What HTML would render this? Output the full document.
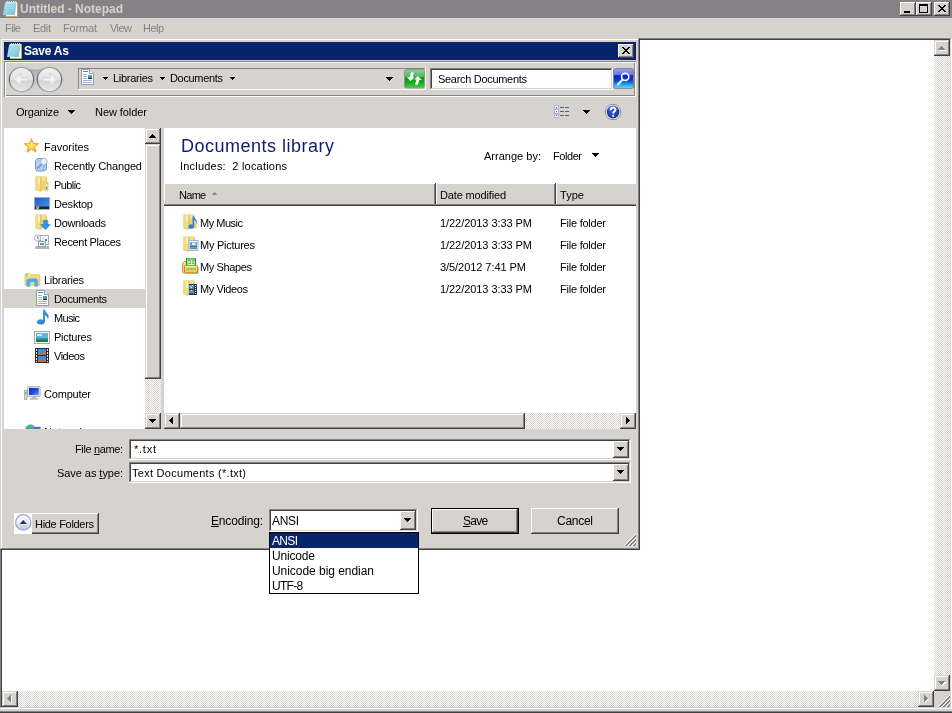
<!DOCTYPE html>
<html>
<head>
<meta charset="utf-8">
<title>Untitled - Notepad</title>
<style>
*{box-sizing:border-box;margin:0;padding:0}
html,body{width:952px;height:713px;overflow:hidden;background:#D6D3CE}
body{position:relative;font-family:"Liberation Sans",sans-serif;font-size:11px;line-height:13px;color:#000}
.a{position:absolute}
.t{position:absolute;white-space:nowrap;height:13px;line-height:13px}
.face{background:#D6D3CE}
.white{background:#fff}
.btn{position:absolute;background:#D6D3CE;box-shadow:inset -1px -1px 0 #424142,inset 1px 1px 0 #fff,inset -2px -2px 0 #848284,inset 2px 2px 0 #D6D3CE}
.sbtn{position:absolute;background:#D6D3CE;box-shadow:inset -1px -1px 0 #424142,inset 1px 1px 0 #D6D3CE,inset -2px -2px 0 #848284,inset 2px 2px 0 #fff}
.sunk{position:absolute;background:#fff;box-shadow:inset -1px -1px 0 #fff,inset 1px 1px 0 #848284,inset -2px -2px 0 #D6D3CE,inset 2px 2px 0 #424142}
.sunk1{position:absolute;box-shadow:inset -1px -1px 0 #fff,inset 1px 1px 0 #848284}
.chk{position:absolute;background-color:#fff;background-image:conic-gradient(#D6D3CE 25%,#fff 0 50%,#D6D3CE 0 75%,#fff 0);background-size:2px 2px}
svg{position:absolute;display:block;overflow:visible}
.ul{text-decoration:underline}
</style>
</head>
<body>
<svg width="0" height="0" style="left:-10px;top:-10px">
<defs>
<g id="xg"><path d="M0 0h2v1h1v1h2V1h1V0h2v1H7v1H6v1H5v1h1v1h1v1h1v1H6V6H5V5H3v1H2v1H0V6h1V5h1V4h1V3H2V2H1V1H0z" fill="#000"/></g>
<g id="grip" shape-rendering="crispEdges">
<path d="M11 0h1v1h-1zM10 1h1v1h-1zM9 2h1v1H9zM8 3h1v1H8zM7 4h1v1H7zM6 5h1v1H6zM5 6h1v1H5zM4 7h1v1H4zM3 8h1v1H3zM2 9h1v1H2zM1 10h1v1H1zM0 11h1v1H0z M11 4h1v1h-1zM10 5h1v1h-1zM9 6h1v1H9zM8 7h1v1H8zM7 8h1v1H7zM6 9h1v1H6zM5 10h1v1H5zM4 11h1v1H4z M11 8h1v1h-1zM10 9h1v1h-1zM9 10h1v1H9zM8 11h1v1H8z" fill="#fff"/>
<path d="M11 1h1v2h-1zM10 2h1v2h-1zM9 3h1v2H9zM8 4h1v2H8zM7 5h1v2H7zM6 6h1v2H6zM5 7h1v2H5zM4 8h1v2H4zM3 9h1v2H3zM2 10h1v2H2zM1 11h1v1H1z M11 5h1v2h-1zM10 6h1v2h-1zM9 7h1v2H9zM8 8h1v2H8zM7 9h1v2H7zM6 10h1v2H6zM5 11h1v1H5z M11 9h1v2h-1zM10 10h1v2h-1zM9 11h1v1H9z" fill="#848284"/>
</g>
<linearGradient id="npg" x1="0" y1="0" x2="1" y2="1"><stop offset="0" stop-color="#C4EEF4"/><stop offset="1" stop-color="#6FC0D4"/></linearGradient>
<g id="npico">
<rect x="4" y="1" width="11.5" height="14.5" fill="#fff"/>
<path d="M4 15.5H15.5V1" fill="none" stroke="#C2A561" stroke-width="1"/>
<path d="M3.2 1.6 L14.6 1.6 L12.8 14 L1 14Z" fill="url(#npg)"/>
<path d="M3 4.2H14M2.6 6.4H13.7M2.3 8.6H13.4M2 10.8H13.1" stroke="#8FD0DE" stroke-width=".7"/>
<path d="M5.4 0v2M7.4 0v2M9.5 0v2M11.5 0v2M13.6 0v2" stroke="#BDECF2" stroke-width="1.1"/>
</g>
<g id="docico">
<path d="M1.5 .5 H9.5 L13.5 4.5 V15.5 H1.5Z" fill="#fff" stroke="#9A9CA4" stroke-width="1"/>
<path d="M9.5 .5 V4.5 H13.5" fill="#F4F4F6" stroke="#9A9CA4" stroke-width="1"/>
<path d="M3 2.5H8" stroke="#3E9CA8" stroke-width="1"/>
<path d="M3 5.5H7M3 7.5H7M3 9.5H7M3 11.5H12M3 13.5H12" stroke="#A9A9DE" stroke-width="1"/>
<rect x="8" y="6" width="4" height="2" fill="#4A9AE0"/><rect x="8" y="8" width="4" height="1" fill="#3E9A50"/><rect x="8" y="9" width="4" height="1" fill="#203040"/>
</g>
</defs>
</svg>
<svg width="0" height="0" style="left:-10px;top:-10px">
<defs>
<linearGradient id="fog" x1="0" y1="0" x2="1" y2="0"><stop offset="0" stop-color="#F7E7A6"/><stop offset=".45" stop-color="#EFD473"/><stop offset=".5" stop-color="#FBF1C4"/><stop offset="1" stop-color="#EBCB62"/></linearGradient>
<g id="fold">
<path d="M.4 1 Q.4 .4 1 .4 H10.8 Q11.4 .4 11.4 1 V1.6 H11.9 V5.8 H12.6 Q13.4 5.8 13.4 6.6 V13.6 Q13.4 14.4 12.6 14.4 H6.2 V15.6 H3.2 V14.8 H1 Q.4 14.8 .4 14.2Z" fill="#E6C75A"/>
<rect x="1" y="1" width="4.6" height="13.4" fill="#F0DB86"/>
<rect x="3.5" y="1.4" width="1.1" height="6.4" fill="#FFFDF2"/>
<rect x="5.6" y="1" width=".8" height="14" fill="#D8B850"/>
<rect x="6.4" y="1" width="4.8" height="13" fill="#EDD272"/>
<rect x="6.8" y="1.2" width="3.4" height="3.6" fill="#F4E29C"/>
</g>
<linearGradient id="scr" x1="0" y1="0" x2="1" y2="1"><stop offset="0" stop-color="#0C22B8"/><stop offset=".55" stop-color="#2450D8"/><stop offset="1" stop-color="#6C9CF0"/></linearGradient>
<g id="comp">
<rect x="3.6" y=".6" width="12.6" height="10" rx=".8" fill="#DCDEE2" stroke="#A2A6AC" stroke-width=".8"/>
<rect x="5" y="2" width="9.8" height="7" fill="url(#scr)"/>
<rect x="8" y="10.6" width="4" height="1.6" fill="#B8BCC2"/><rect x="6" y="12.2" width="8" height="1.2" fill="#C4C8CC" stroke="#9CA0A6" stroke-width=".4"/>
<rect x=".6" y="4.6" width="2.4" height="8.8" fill="#D2D4D8" stroke="#9A9EA4" stroke-width=".7"/>
<rect x="1.2" y="6" width="1.2" height="2.4" fill="#48C040"/>
</g>
</defs>
</svg>
<!-- ================= NOTEPAD WINDOW ================= -->
<div class="a" style="left:0;top:0;width:952px;height:18px;background:#848284"></div>
<!-- notepad icon -->
<svg style="left:2px;top:1px" width="17" height="16" viewBox="0 0 17 16"><use href="#npico"/></svg>

<!-- caption buttons -->
<div class="btn" style="left:900px;top:2px;width:16px;height:14px"></div>
<div class="a" style="left:904px;top:11px;width:6px;height:2px;background:#000"></div>
<div class="btn" style="left:916px;top:2px;width:16px;height:14px"></div>
<div class="a" style="left:919px;top:4px;width:9px;height:9px;border:1px solid #000;border-top-width:2px"></div>
<div class="btn" style="left:934px;top:2px;width:16px;height:14px"></div>
<svg style="left:938px;top:5px" width="8" height="7" viewBox="0 0 8 7" shape-rendering="crispEdges"><use href="#xg"/></svg>

<!-- edit control -->
<div class="sunk" style="left:0;top:38px;width:952px;height:671px"></div>
<!-- v scrollbar -->
<div class="chk" style="left:934px;top:40px;width:16px;height:651px"></div>
<div class="sbtn" style="left:934px;top:40px;width:16px;height:16px"></div>
<svg style="left:938px;top:46px" width="8" height="5" viewBox="0 0 8 5" shape-rendering="crispEdges"><path d="M4 1h1v1h1v1h1v1h1v1H1V4h1V3h1V2h1z" fill="#fff"/><path d="M3 0h1v1h1v1h1v1h1v1H0V3h1V2h1V1h1z" fill="#848284"/></svg>
<div class="sbtn" style="left:934px;top:675px;width:16px;height:16px"></div>
<svg style="left:938px;top:681px" width="8" height="5" viewBox="0 0 8 5" shape-rendering="crispEdges"><path d="M1 1h7v1H7v1H6v1H5v1H4V4H3V3H2V2H1z" fill="#fff"/><path d="M0 0h7v1H6v1H5v1H4v1H3V3H2V2H1V1H0z" fill="#848284"/></svg>
<!-- h scrollbar -->
<div class="chk" style="left:2px;top:691px;width:932px;height:16px"></div>
<div class="sbtn" style="left:2px;top:691px;width:16px;height:16px"></div>
<svg style="left:7px;top:695px" width="5" height="8" viewBox="0 0 5 8" shape-rendering="crispEdges"><path d="M4 1h1v7H4V7H3V6H2V5H1V4h1V3h1V2h1z" fill="#fff"/><path d="M3 0h1v7H3V6H2V5H1V4H0V3h1V2h1V1h1z" fill="#848284"/></svg>
<div class="sbtn" style="left:918px;top:691px;width:16px;height:16px"></div>
<svg style="left:924px;top:695px" width="5" height="8" viewBox="0 0 5 8" shape-rendering="crispEdges"><path d="M1 1h1v1h1v1h1v1h1v1H4v1H3v1H2v1H1z" fill="#fff"/><path d="M0 0h1v1h1v1h1v1h1v1H3v1H2v1H1v1H0z" fill="#848284"/></svg>
<div class="a face" style="left:934px;top:691px;width:16px;height:16px"></div>
<svg style="left:938px;top:695px" width="13" height="13" viewBox="0 0 13 13"><use href="#grip"/></svg>
<!-- bottom frame -->
<div class="a" style="left:0;top:711px;width:952px;height:1px;background:#848284"></div>
<div class="a" style="left:0;top:712px;width:952px;height:1px;background:#424142"></div>

<!-- ================= SAVE AS DIALOG ================= -->
<div class="a" id="dlg" style="left:0;top:38px;width:640px;height:512px;background:#D6D3CE;box-shadow:inset -1px -1px 0 #424142,inset 1px 1px 0 #D6D3CE,inset -2px -2px 0 #848284,inset 2px 2px 0 #fff"></div>
<div class="a" style="left:4px;top:42px;width:632px;height:18px;background:#08246B"></div>
<svg style="left:6px;top:43px" width="17" height="16" viewBox="0 0 17 16"><use href="#npico"/></svg>
<div class="btn" style="left:618px;top:44px;width:16px;height:14px"></div>
<svg style="left:622px;top:47px" width="8" height="7" viewBox="0 0 8 7" shape-rendering="crispEdges"><use href="#xg"/></svg>

<!-- nav bar groove -->
<div class="a" style="left:4px;top:61px;width:632px;height:36px;box-shadow:inset 1px 1px 0 #848284,inset -1px -1px 0 #fff,inset 2px 2px 0 #fff,inset -2px -2px 0 #848284"></div>
<!-- back / forward -->
<svg style="left:7px;top:65px" width="58" height="30" viewBox="0 0 58 30">
<defs>
<linearGradient id="pillg" x1="0" y1="0" x2="0" y2="1"><stop offset="0" stop-color="#A9A7A4"/><stop offset=".45" stop-color="#C4C2BE"/><stop offset="1" stop-color="#DAD8D4"/></linearGradient>
<linearGradient id="ballg" x1="0" y1="0" x2="0" y2="1"><stop offset="0" stop-color="#F2F2F2"/><stop offset=".5" stop-color="#E2E2E2"/><stop offset=".5" stop-color="#D2D2D2"/><stop offset="1" stop-color="#E9E9E9"/></linearGradient>
<linearGradient id="ringg" x1="0" y1="0" x2="0" y2="1"><stop offset="0" stop-color="#9AA0A6"/><stop offset=".5" stop-color="#5F6A74"/><stop offset="1" stop-color="#A4A8AC"/></linearGradient>
</defs>
<path d="M14.5 2.5 C22 5 36 5 42.5 2.5 L42.5 27.5 C36 25 22 25 14.5 27.5Z" fill="url(#pillg)"/>
<circle cx="14.5" cy="14.5" r="12.2" fill="url(#ballg)" stroke="url(#ringg)" stroke-width="1.3"/>
<circle cx="42.5" cy="14.5" r="12.2" fill="url(#ballg)" stroke="url(#ringg)" stroke-width="1.3"/>
<path d="M6.9 14.5 L14 8 V12.8 H21.3 V16.2 H14 V21Z" fill="#F1F1F1" stroke="#CDCDCD" stroke-width=".8"/>
<path d="M50.1 14.5 L43 8 V12.8 H35.7 V16.2 H43 V21Z" fill="#F1F1F1" stroke="#CDCDCD" stroke-width=".8"/>
</svg>

<!-- address box -->
<div class="sunk1" style="left:78px;top:68px;width:348px;height:22px"></div>
<svg style="left:80px;top:69px" width="16" height="16" viewBox="0 0 16 16"><use href="#docico"/></svg>
<svg style="left:103px;top:77px" width="5" height="3" viewBox="0 0 5 3" shape-rendering="crispEdges"><path d="M0 0h5v1H4v1H3v1H2V2H1V1H0z"/></svg>
<svg style="left:160px;top:77px" width="5" height="3" viewBox="0 0 5 3" shape-rendering="crispEdges"><path d="M0 0h5v1H4v1H3v1H2V2H1V1H0z"/></svg>
<svg style="left:230px;top:77px" width="5" height="3" viewBox="0 0 5 3" shape-rendering="crispEdges"><path d="M0 0h5v1H4v1H3v1H2V2H1V1H0z"/></svg>
<svg style="left:386px;top:77px" width="7" height="4" viewBox="0 0 7 4" shape-rendering="crispEdges"><path d="M0 0h7v1H6v1H5v1H4v1H3V3H2V2H1V1H0z"/></svg>
<!-- refresh -->
<svg style="left:404px;top:69px" width="21" height="20" viewBox="0 0 21 20">
<defs><linearGradient id="grn" x1="0" y1="0" x2="0" y2="1"><stop offset="0" stop-color="#8AD592"/><stop offset=".38" stop-color="#4DBB55"/><stop offset=".42" stop-color="#0D9A12"/><stop offset=".7" stop-color="#16A81A"/><stop offset="1" stop-color="#3FD23F"/></linearGradient></defs>
<rect x=".5" y=".5" width="20" height="18.5" rx="2" fill="url(#grn)" stroke="#8E9690"/>
<path d="M7.4 3 L9.8 3.7 L8.7 8 L10.6 8.5 L6.3 12.3 L2.9 8 L5.7 8.2Z" fill="#fff"/>
<path d="M13.9 7 L17.9 11 L15.5 10.8 L13.6 15.9 L10.9 15.2 L12.7 10.5 L10 10.4Z" fill="#fff"/>
</svg>
<!-- search box -->
<div class="sunk" style="left:430px;top:68px;width:183px;height:22px"></div>
<svg style="left:613px;top:68px" width="21" height="21" viewBox="0 0 21 21">
<defs><linearGradient id="blu" x1="0" y1="0" x2="0" y2="1"><stop offset="0" stop-color="#9A9EEC"/><stop offset=".3" stop-color="#6C78E0"/><stop offset=".36" stop-color="#0A22C4"/><stop offset=".6" stop-color="#0C40D0"/><stop offset=".85" stop-color="#30B8F4"/><stop offset="1" stop-color="#58DCFC"/></linearGradient></defs>
<rect x=".5" y=".5" width="20" height="20" rx="2" fill="url(#blu)" stroke="#8A868C"/>
<circle cx="12.2" cy="8.8" r="3.6" fill="none" stroke="#fff" stroke-width="1.6"/>
<path d="M9.6 11.6 L5 16.4" stroke="#E8ECF8" stroke-width="2.2" stroke-linecap="round"/>
</svg>

<!-- toolbar -->
<svg style="left:68px;top:110px" width="7" height="4" viewBox="0 0 7 4" shape-rendering="crispEdges"><path d="M0 0h7v1H6v1H5v1H4v1H3V3H2V2H1V1H0z"/></svg>
<svg style="left:554px;top:105px" width="16" height="14" viewBox="0 0 16 14" shape-rendering="crispEdges">
<rect x="0" y="0" width="5" height="13" fill="#E8ECF4"/>
<rect x=".5" y=".5" width="4" height="3.4" fill="#fff" stroke="#A8B4D8"/><rect x=".5" y="4.8" width="4" height="3.4" fill="#fff" stroke="#A8B4D8"/><rect x=".5" y="9.1" width="4" height="3.4" fill="#fff" stroke="#A8B4D8"/>
<rect x="2" y="2" width="1" height="1" fill="#30A030"/><rect x="2" y="6" width="1" height="1" fill="#D03030"/><rect x="2" y="10" width="1" height="1" fill="#3060D0"/>
<path d="M6 2h4v1H6zM11 2h4v1h-4zM6 6h4v1H6zM11 6h4v1h-4zM6 10h4v1H6zM11 10h4v1h-4z" fill="#52647C"/>
</svg>
<svg style="left:583px;top:110px" width="7" height="4" viewBox="0 0 7 4" shape-rendering="crispEdges"><path d="M0 0h7v1H6v1H5v1H4v1H3V3H2V2H1V1H0z"/></svg>
<svg style="left:604px;top:103px" width="18" height="18" viewBox="0 0 18 18">
<defs><radialGradient id="hlp" cx=".4" cy=".3" r=".8"><stop offset="0" stop-color="#3C68D8"/><stop offset="1" stop-color="#10288C"/></radialGradient></defs>
<circle cx="9" cy="9" r="7.7" fill="#fff" stroke="#8C8C94" stroke-width="1"/>
<circle cx="9" cy="9" r="6.4" fill="url(#hlp)"/>
<path d="M6.6 7.2 C6.6 3.6 11.6 3.8 11.5 6.8 C11.4 8.6 9.2 8.6 9.2 10.6" fill="none" stroke="#fff" stroke-width="1.9"/>
<rect x="8.2" y="11.8" width="2" height="2" fill="#fff"/>
</svg>

<!-- nav pane -->
<div class="a white" style="left:4px;top:128px;width:141px;height:301px;overflow:hidden" id="navpane">
<div class="a face" style="left:0;top:161px;width:141px;height:19px"></div>
</div>
<!-- nav scrollbar -->
<div class="chk" style="left:145px;top:128px;width:16px;height:301px"></div>
<div class="sbtn" style="left:145px;top:128px;width:16px;height:16px"></div>
<svg style="left:149px;top:134px" width="7" height="4" viewBox="0 0 7 4" shape-rendering="crispEdges"><path d="M3 0h1v1h1v1h1v1h1v1H0V3h1V2h1V1h1z"/></svg>
<div class="sbtn" style="left:145px;top:144px;width:16px;height:235px"></div>
<div class="sbtn" style="left:145px;top:413px;width:16px;height:16px"></div>
<svg style="left:149px;top:419px" width="7" height="4" viewBox="0 0 7 4" shape-rendering="crispEdges"><path d="M0 0h7v1H6v1H5v1H4v1H3V3H2V2H1V1H0z"/></svg>

<!-- file pane -->
<div class="a white" style="left:164px;top:128px;width:472px;height:285px"></div>
<!-- header -->
<div class="a face" style="left:164px;top:184px;width:472px;height:22px"></div>
<!-- h scroll -->
<div class="chk" style="left:164px;top:413px;width:472px;height:16px"></div>
<div class="sbtn" style="left:164px;top:413px;width:16px;height:16px"></div>
<svg style="left:169px;top:417px" width="4" height="7" viewBox="0 0 4 7" shape-rendering="crispEdges"><path d="M3 0h1v7H3V6H2V5H1V4H0V3h1V2h1V1h1z"/></svg>
<div class="sbtn" style="left:180px;top:413px;width:345px;height:16px"></div>
<div class="sbtn" style="left:620px;top:413px;width:16px;height:16px"></div>
<svg style="left:626px;top:417px" width="4" height="7" viewBox="0 0 4 7" shape-rendering="crispEdges"><path d="M0 0h1v1h1v1h1v1h1v1H3v1H2v1H1v1H0z"/></svg>
<!-- header separators -->
<div class="a" style="left:434px;top:184px;width:1px;height:21px;background:#848284"></div>
<div class="a" style="left:435px;top:183px;width:1px;height:23px;background:#424142"></div>
<div class="a" style="left:436px;top:184px;width:1px;height:20px;background:#fff"></div>
<div class="a" style="left:554px;top:184px;width:1px;height:21px;background:#848284"></div>
<div class="a" style="left:555px;top:183px;width:1px;height:23px;background:#424142"></div>
<div class="a" style="left:556px;top:184px;width:1px;height:20px;background:#fff"></div>
<div class="a" style="left:164px;top:204px;width:472px;height:1px;background:#848284"></div>
<div class="a" style="left:164px;top:205px;width:472px;height:1px;background:#424142"></div>
<div class="a" style="left:164px;top:184px;width:1px;height:20px;background:#fff"></div>
<!-- sort arrow -->
<svg style="left:212px;top:192px" width="5" height="3" viewBox="0 0 5 3" shape-rendering="crispEdges"><path d="M2 0h1v1h1v1h1v1H0V2h1V1h1z" fill="#8C8C98"/></svg>
<!-- arrange-by arrow -->
<svg style="left:592px;top:153px" width="7" height="4" viewBox="0 0 7 4" shape-rendering="crispEdges"><path d="M0 0h7v1H6v1H5v1H4v1H3V3H2V2H1V1H0z"/></svg>

<!-- file name / type combos -->
<div class="sunk" style="left:129px;top:439px;width:502px;height:21px"></div>
<div class="btn" style="left:613px;top:441px;width:16px;height:17px"></div>
<svg style="left:617px;top:447px" width="7" height="4" viewBox="0 0 7 4" shape-rendering="crispEdges"><path d="M0 0h7v1H6v1H5v1H4v1H3V3H2V2H1V1H0z"/></svg>
<div class="sunk" style="left:129px;top:462px;width:502px;height:21px"></div>
<div class="btn" style="left:613px;top:464px;width:16px;height:17px"></div>
<svg style="left:617px;top:470px" width="7" height="4" viewBox="0 0 7 4" shape-rendering="crispEdges"><path d="M0 0h7v1H6v1H5v1H4v1H3V3H2V2H1V1H0z"/></svg>

<!-- hide folders -->
<div class="btn" style="left:14px;top:513px;width:85px;height:21px"></div>
<div class="a white" style="left:14px;top:513px;width:18px;height:21px"></div>
<svg style="left:15px;top:514px" width="17" height="18" viewBox="0 0 17 18">
<defs><linearGradient id="hfg" x1="0" y1="0" x2="0" y2="1"><stop offset="0" stop-color="#FFFFFF"/><stop offset=".5" stop-color="#ECEEF0"/><stop offset="1" stop-color="#BFC4C8"/></linearGradient></defs>
<circle cx="8.3" cy="8.4" r="7.7" fill="url(#hfg)" stroke="#98A2E2" stroke-width="1.2"/>
<path d="M4.7 9.9 L8.3 6 L11.9 9.9Z" fill="#1C2F9E"/>
</svg>

<!-- encoding combo -->
<div class="sunk" style="left:269px;top:509px;width:149px;height:23px"></div>
<div class="btn" style="left:400px;top:511px;width:16px;height:19px"></div>
<svg style="left:404px;top:518px" width="7" height="4" viewBox="0 0 7 4" shape-rendering="crispEdges"><path d="M0 0h7v1H6v1H5v1H4v1H3V3H2V2H1V1H0z"/></svg>

<!-- save / cancel -->
<div class="a" style="left:431px;top:508px;width:88px;height:26px;background:#000"></div>
<div class="btn" style="left:432px;top:509px;width:86px;height:24px"></div>
<div class="btn" style="left:531px;top:508px;width:88px;height:26px"></div>

<!-- dialog grip -->
<svg style="left:624px;top:534px" width="13" height="13" viewBox="0 0 13 13"><use href="#grip"/></svg>

<!-- dropdown list -->
<div class="a" style="left:269px;top:532px;width:150px;height:62px;background:#fff;border:1px solid #000"></div>
<div class="a" style="left:270px;top:533px;width:148px;height:15px;background:#08246B"></div>
<!-- ===== tree icons ===== -->
<svg style="left:24px;top:138px" width="15" height="15" viewBox="0 0 15 15">
<defs><radialGradient id="stg" cx=".5" cy=".5" r=".55"><stop offset="0" stop-color="#FFF08A"/><stop offset=".55" stop-color="#FFC83A"/><stop offset="1" stop-color="#F08A1C"/></radialGradient></defs>
<path d="M7.5 .6 L9.5 5.4 L14.6 5.7 L10.7 9 L12 14.2 L7.5 11.3 L3 14.2 L4.3 9 L.4 5.7 L5.5 5.4Z" fill="url(#stg)" stroke="#EE8A20" stroke-width=".7" stroke-linejoin="round"/>
</svg>
<!-- recently changed -->
<svg style="left:34px;top:157px" width="15" height="15" viewBox="0 0 15 15">
<path d="M1.5 3.5 L3.5 1.5 H10.5 L12.5 3.5 V12 L10.5 14 H3 L1.5 12.5Z" fill="#B3CFF3" stroke="#6C98E2" stroke-width="1" stroke-linejoin="round"/>
<path d="M9.8 4.5 V13.5" stroke="#86ABEA" stroke-width="1"/>
<path d="M8 6.8 L3.6 11.2" stroke="#8C949C" stroke-width="1.7" stroke-linecap="round"/>
<circle cx="9.8" cy="4.6" r="3.3" fill="#EAF3FD" stroke="#9FB4D4" stroke-width="1"/>
</svg>
<!-- public folder -->
<svg style="left:35px;top:176px" width="15" height="16" viewBox="0 0 15 16"><use href="#fold"/><rect x="11" y="8" width="1.2" height="5" fill="#fff"/><rect x="11" y="10.5" width="1.2" height="2.5" fill="#2E9AE2"/></svg>
<!-- desktop -->
<svg style="left:34px;top:197px" width="16" height="13" viewBox="0 0 16 13">
<defs><linearGradient id="dsk" x1="0" y1="0" x2="1" y2="1"><stop offset="0" stop-color="#1F58CC"/><stop offset="1" stop-color="#4C98EC"/></linearGradient></defs>
<rect x=".5" y=".5" width="15" height="12" fill="url(#dsk)" stroke="#8FB0E2"/>
<rect x="1" y="9.5" width="14" height="2.5" fill="#20242A"/>
<circle cx="3.6" cy="10.6" r="1.7" fill="#F0B020"/><circle cx="3.2" cy="10.2" r=".8" fill="#E04030"/><circle cx="4.2" cy="11" r=".8" fill="#40A0E0"/>
</svg>
<!-- downloads -->
<svg style="left:35px;top:214px" width="16" height="17" viewBox="0 0 16 17"><use href="#fold"/>
<path d="M8.6 6.5 H12.4 V10.5 H15.2 L10.5 15.6 L5.8 10.5 H8.6Z" fill="#2B96EA" stroke="#1C7CD2" stroke-width=".6"/></svg>
<!-- recent places -->
<svg style="left:34px;top:234px" width="16" height="15" viewBox="0 0 16 15">
<rect x="6.5" y="1.5" width="8" height="9" fill="#fff" stroke="#A8AAAE"/>
<rect x="8" y="3.5" width="3" height="1" fill="#C8CCD4"/><rect x="11" y="5" width="2" height="2" fill="#2F88E8"/><rect x="8" y="5.5" width="2" height="1" fill="#C8CCD4"/>
<rect x="4.5" y="7.5" width="7" height="5" fill="#EAF2FA" stroke="#9EA4AA"/>
<rect x="6" y="9" width="4" height="2" fill="#58A8D8"/><rect x="6" y="10" width="4" height="1" fill="#58A850"/>
<path d="M2 12.5 H14.5 L15 14.5 H1.5Z" fill="#B2B4B6" stroke="#9A9C9E" stroke-width=".6"/>
<circle cx="3.6" cy="4" r="3.1" fill="#F4F6F8" stroke="#A4ACB4" stroke-width=".9"/>
<path d="M3.6 2.2 V4.2 H5" fill="none" stroke="#6880A0" stroke-width=".9"/>
</svg>
<!-- libraries -->
<svg style="left:24px;top:273px" width="17" height="14" viewBox="0 0 17 14">
<path d="M1 1.5 Q1 .6 2 .6 H6.4 L7.6 1.8 H14.8 Q15.8 1.8 15.8 2.8 V11.6 Q15.8 12.4 14.8 12.4 H2 Q1 12.4 1 11.6Z" fill="#F4DC7C" stroke="#DDB84E" stroke-width=".7"/>
<rect x="2.2" y="1.3" width="1.6" height="1" fill="#44C83C"/><rect x="4" y="1.3" width="2.2" height="1" fill="#fff"/>
<path d="M2.6 13.4 V8.2 Q2.6 5.6 5.2 5.6 H11.4 Q14 5.6 14 8.2 V13.4 H10.6 V9.8 Q10.6 9 9.8 9 H6.8 Q6 9 6 9.8 V13.4Z" fill="#4FAAE6" stroke="#7EC4F0" stroke-width=".6"/>
</svg>
<svg style="left:35px;top:290px" width="16" height="16" viewBox="0 0 16 16"><use href="#docico"/></svg>
<!-- music -->
<svg style="left:36px;top:309px" width="14" height="16" viewBox="0 0 14 16">
<defs><linearGradient id="mus" x1="0" y1="0" x2="1" y2="1"><stop offset="0" stop-color="#56B4F4"/><stop offset="1" stop-color="#1668CC"/></linearGradient></defs>
<path d="M7 .6 H8.8 Q9.6 3.2 11.4 4.8 Q13.6 7 11.8 10.4 Q12 7.6 8.9 6.2 V12.6 Q8.8 15.4 4.8 15.6 Q.6 15.4 .8 12.8 Q1.2 10.4 4.6 10.2 Q6.2 10.2 7 10.8Z" fill="url(#mus)"/>
</svg>
<!-- pictures -->
<svg style="left:34px;top:331px" width="16" height="13" viewBox="0 0 16 13">
<rect x=".5" y=".5" width="15" height="12" fill="#fff" stroke="#A6A8AC"/>
<rect x="2" y="2" width="12" height="5" fill="#62B2EA"/><rect x="3" y="3" width="5" height="2" fill="#D8ECFA"/>
<rect x="2" y="7" width="12" height="2" fill="#2E9A7A"/><rect x="2" y="9" width="12" height="2" fill="#1E7A4E"/>
</svg>
<!-- videos -->
<svg style="left:35px;top:348px" width="14" height="15" viewBox="0 0 14 15" shape-rendering="crispEdges">
<rect x="0" y="0" width="14" height="15" fill="#2A2C30"/>
<rect x="3" y="1" width="8" height="6" fill="#3C8EE0"/><rect x="3" y="8" width="8" height="6" fill="#3C8EE0"/>
<path d="M3 5h3v2H3zM8 4h3v3H8zM3 12h4v2H3zM8 11h3v3H8z" fill="#D86A30"/>
<path d="M1 1h1v2H1zM1 4h1v2H1zM1 7h1v2H1zM1 10h1v2H1zM1 13h1v1H1zM12 1h1v2h-1zM12 4h1v2h-1zM12 7h1v2h-1zM12 10h1v2h-1zM12 13h1v1h-1z" fill="#E8E8E8"/>
</svg>
<!-- computer -->
<svg style="left:24px;top:386px" width="17" height="14" viewBox="0 0 17 14"><use href="#comp"/></svg>
<!-- network (clipped) -->
<svg style="left:24px;top:423px" width="17" height="6" viewBox="0 0 17 6">
<circle cx="6.5" cy="7" r="5.4" fill="#3AA0E8" stroke="#9CCCF0" stroke-width=".8"/>
<path d="M3.5 4 Q6 1.4 8.6 3.4 L7 6H3Z" fill="#48B848"/>
<rect x="9" y="4" width="7.5" height="2" fill="#3050D0" stroke="#A8ACB4" stroke-width=".6"/>
</svg>

<!-- ===== file icons ===== -->
<svg style="left:183px;top:214px" width="16" height="16" viewBox="0 0 16 16"><use href="#fold"/>
<path d="M9.6 2.2 H11 Q11.4 4 12.8 5.2 Q14.6 7 13.2 10 Q13.4 7.6 11.1 6.6 V12 Q11 14.6 8 14.7 Q5.2 14.6 5.4 12.4 Q5.8 10.4 8.2 10.3 Q9.1 10.3 9.6 10.7Z" fill="#2583DE"/>
<path d="M11.4 6.2 Q12.6 7 12.7 8.6" stroke="#fff" stroke-width=".8" fill="none"/></svg>
<svg style="left:183px;top:236px" width="16" height="16" viewBox="0 0 16 16"><use href="#fold"/>
<rect x="6" y="4.5" width="9" height="10" fill="#fff" stroke="#AEB0BA"/>
<rect x="7" y="6" width="7" height="4" fill="#5CA9EA"/><rect x="9" y="6.5" width="3.4" height="2.6" fill="#DDF0FB"/>
<rect x="7" y="10" width="7" height="1.2" fill="#2F8450"/><rect x="7" y="11.2" width="7" height="2" fill="#4C8EC8"/></svg>
<svg style="left:182px;top:258px" width="17" height="16" viewBox="0 0 17 16">
<path d="M15.4 9 H16.4 V15.4 H3.4 V14.6 H15.4Z" fill="#6C6470" opacity=".75"/>
<path d="M.6 6.4 Q.6 5.2 1.4 4.6 L2.4 3.6 H5 V14.8 H1.8 Q.6 14.8 .6 13.6Z" fill="#F6DC7E" stroke="#BC7C1C" stroke-width=".9"/>
<rect x="4" y=".2" width="10" height="7.2" fill="#36B434"/><rect x="4" y=".2" width="1" height="7.2" fill="#1E9A28"/><rect x="13" y=".2" width="1" height="7.2" fill="#1A8E26"/>
<rect x="5.4" y="1.6" width="7.4" height="5.4" fill="#DFF8D6"/>
<path d="M6 2.6H8.6M6 5.4H8.6M8.6 2.6V5.4M10 2.6H12.4M10 5.4H12.4M10 4H12" stroke="#44B82E" stroke-width=".9" fill="none"/>
<defs><linearGradient id="shp" x1="0" y1="0" x2="0" y2="1"><stop offset="0" stop-color="#FFF6BA"/><stop offset="1" stop-color="#F0BC38"/></linearGradient></defs>
<rect x="2.6" y="7.4" width="12.8" height="7.6" rx=".8" fill="url(#shp)" stroke="#B8791A" stroke-width=".9"/>
<rect x="4" y="8.4" width="10" height="3.2" fill="#7EDA62"/><rect x="4" y="8.4" width="10" height="1" fill="#F6FCF2"/>
<path d="M4 11.6H14" stroke="#C49A4A" stroke-width=".6"/>
</svg>
<svg style="left:183px;top:280px" width="16" height="16" viewBox="0 0 16 16"><use href="#fold"/>
<g shape-rendering="crispEdges"><rect x="6" y="4" width="8" height="11" fill="#223A4C"/>
<rect x="6" y="5" width="5" height="4" fill="#3F94D4"/><rect x="6" y="10" width="5" height="4" fill="#3A9AD8"/>
<path d="M7 6h1v1H7zM9 5h1v1H9zM8 7h1v1H8zM8 10h1v1H8z" fill="#EAF0F4"/><path d="M10 7h1v2h-1zM10 12h1v2h-1zM6 8h2v1H6z" fill="#B8742A"/><path d="M6 13h4v1H6z" fill="#2A5C8C"/>
<path d="M12 5h1v1h-1zM12 7h1v1h-1zM12 9h1v1h-1zM12 11h1v1h-1zM12 13h1v1h-1z" fill="#F4F0E4"/></g></svg>
<!-- ===== texts ===== -->
<div class="a" style="left:0;top:0;width:952px;height:713px;will-change:transform">
<div class="t" id="t0" style="left:20px;top:3px;font-weight:bold;color:#D6D3CE;font-size:12px;letter-spacing:-0.019px">Untitled - Notepad</div>
<div class="t" id="t1" style="left:5px;top:22px;color:#848284;letter-spacing:-0.578px">File</div>
<div class="t" id="t2" style="left:33px;top:22px;color:#848284;letter-spacing:-0.323px">Edit</div>
<div class="t" id="t3" style="left:63px;top:22px;color:#848284;letter-spacing:-0.169px">Format</div>
<div class="t" id="t4" style="left:110px;top:22px;color:#848284;letter-spacing:-0.552px">View</div>
<div class="t" id="t5" style="left:143px;top:22px;color:#848284;letter-spacing:-0.542px">Help</div>
<div class="t" id="t6" style="left:24px;top:45px;font-weight:bold;color:#fff;font-size:12px;letter-spacing:-0.211px">Save As</div>
<div class="t" id="t7" style="left:113px;top:72px;letter-spacing:-0.273px">Libraries</div>
<div class="t" id="t8" style="left:170px;top:72px;letter-spacing:-0.330px">Documents</div>
<div class="t" id="t9" style="left:438px;top:73px;letter-spacing:-0.303px">Search Documents</div>
<div class="t" id="t10" style="left:16px;top:106px;letter-spacing:-0.234px">Organize</div>
<div class="t" id="t11" style="left:95px;top:106px;letter-spacing:-0.064px">New folder</div>
<div class="t" id="t12" style="left:44px;top:141px;letter-spacing:-0.031px">Favorites</div>
<div class="t" id="t13" style="left:54px;top:160px;letter-spacing:-0.168px">Recently Changed</div>
<div class="t" id="t14" style="left:54px;top:179px;letter-spacing:-0.594px">Public</div>
<div class="t" id="t15" style="left:54px;top:198px;letter-spacing:-0.227px">Desktop</div>
<div class="t" id="t16" style="left:54px;top:217px;letter-spacing:-0.303px">Downloads</div>
<div class="t" id="t17" style="left:54px;top:236px;letter-spacing:-0.328px">Recent Places</div>
<div class="t" id="t18" style="left:44px;top:274px;letter-spacing:-0.273px">Libraries</div>
<div class="t" id="t19" style="left:54px;top:293px;letter-spacing:-0.330px">Documents</div>
<div class="t" id="t20" style="left:54px;top:312px;letter-spacing:-0.684px">Music</div>
<div class="t" id="t21" style="left:54px;top:331px;letter-spacing:-0.250px">Pictures</div>
<div class="t" id="t22" style="left:54px;top:350px;letter-spacing:-0.487px">Videos</div>
<div class="t" id="t23" style="left:44px;top:388px;letter-spacing:-0.185px">Computer</div>
<div class="t" id="t24" style="left:44px;top:426px;letter-spacing:0.109px">Network</div>
<div class="t" id="t25" style="left:181px;top:135px;height:22px;line-height:22px;font-size:18px;color:#101C70;letter-spacing:0.497px">Documents library</div>
<div class="t" id="t26" style="left:180px;top:160px;letter-spacing:0.203px">Includes:&nbsp; 2 locations</div>
<div class="t" id="t27" style="left:484px;top:150px;letter-spacing:0.013px">Arrange by:</div>
<div class="t" id="t28" style="left:553px;top:150px;letter-spacing:-0.438px">Folder</div>
<div class="t" id="t29" style="left:179px;top:189px;letter-spacing:-0.700px">Name</div>
<div class="t" id="t30" style="left:440px;top:189px;letter-spacing:-0.156px">Date modified</div>
<div class="t" id="t31" style="left:560px;top:189px;letter-spacing:0.047px">Type</div>
<div class="t" id="t32" style="left:200px;top:217px;letter-spacing:-0.493px">My Music</div>
<div class="t" id="t33" style="left:200px;top:239px;letter-spacing:-0.247px">My Pictures</div>
<div class="t" id="t34" style="left:200px;top:261px;letter-spacing:-0.379px">My Shapes</div>
<div class="t" id="t35" style="left:200px;top:283px;letter-spacing:-0.395px">My Videos</div>
<div class="t" id="t36" style="left:440px;top:217px;letter-spacing:-0.061px">1/22/2013 3:33 PM</div>
<div class="t" id="t37" style="left:440px;top:239px;letter-spacing:-0.061px">1/22/2013 3:33 PM</div>
<div class="t" id="t38" style="left:440px;top:261px;letter-spacing:-0.056px">3/5/2012 7:41 PM</div>
<div class="t" id="t39" style="left:440px;top:283px;letter-spacing:-0.061px">1/22/2013 3:33 PM</div>
<div class="t" id="t40" style="left:560px;top:217px;letter-spacing:-0.230px">File folder</div>
<div class="t" id="t41" style="left:560px;top:239px;letter-spacing:-0.230px">File folder</div>
<div class="t" id="t42" style="left:560px;top:261px;letter-spacing:-0.230px">File folder</div>
<div class="t" id="t43" style="left:560px;top:283px;letter-spacing:-0.230px">File folder</div>
<div class="t" id="t44" style="left:75px;top:443px;letter-spacing:-0.375px">File <span class="ul">n</span>ame:</div>
<div class="t" id="t45" style="left:57px;top:467px;letter-spacing:-0.056px">Save as <span class="ul">t</span>ype:</div>
<div class="t" id="t46" style="left:134px;top:443px;letter-spacing:0.762px">*.txt</div>
<div class="t" id="t47" style="left:132px;top:467px;letter-spacing:0.276px">Text Documents (*.txt)</div>
<div class="t" id="t48" style="left:35px;top:518px;letter-spacing:-0.305px">Hide Folders</div>
<div class="t" id="t49" style="left:211px;top:515px;font-size:12px;letter-spacing:-0.174px"><span class="ul">E</span>ncoding:</div>
<div class="t" id="t50" style="left:272px;top:515px;font-size:12px;letter-spacing:-0.339px">ANSI</div>
<div class="t" id="t51" style="left:272px;top:535px;font-size:12px;color:#fff;letter-spacing:-0.672px">ANSI</div>
<div class="t" id="t52" style="left:272px;top:550px;font-size:12px;letter-spacing:-0.172px">Unicode</div>
<div class="t" id="t53" style="left:272px;top:565px;font-size:12px;letter-spacing:-0.044px">Unicode big endian</div>
<div class="t" id="t54" style="left:272px;top:580px;font-size:12px;letter-spacing:-0.700px">UTF-8</div>
<div class="t" id="t55" style="left:463px;top:515px;font-size:12px;letter-spacing:-0.700px"><span class="ul">S</span>ave</div>
<div class="t" id="t56" style="left:557px;top:515px;font-size:12px;letter-spacing:-0.272px">Cancel</div>
</div>
<div class="a face" style="left:2px;top:429px;width:160px;height:10px"></div>
</body>
</html>
